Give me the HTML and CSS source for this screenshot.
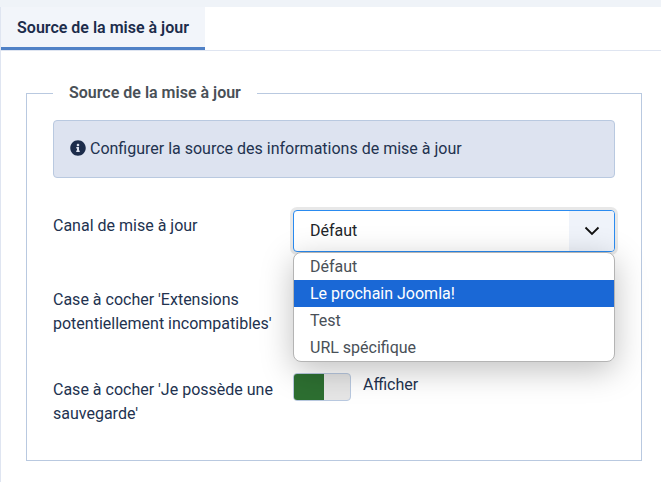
FILE: index.html
```html
<!DOCTYPE html>
<html lang="fr">
<head>
    <meta charset="UTF-8">
    <meta name="viewport" content="width=device-width, initial-scale=1.0">
    <title>Source de la mise à jour</title>
    <link rel="stylesheet" href="styles.css">
</head>
<body>
    <div class="tabs">
        <button class="tab">Source de la mise à jour</button>
    </div>

    <div class="panel">
        <fieldset class="options">
            <legend>Source de la mise à jour</legend>

            <div class="alert">
                <svg class="info-icon" viewBox="0 0 512 512" width="16" height="16">
                    <path d="M256 8C119 8 8 119 8 256s111 248 248 248 248-111 248-248S393 8 256 8zm0 110c23.2 0 42 18.800 42 42s-18.800 42-42 42-42-18.800-42-42 18.800-42 42-42zm56 254c0 6.600-5.400 12-12 12h-88c-6.600 0-12-5.400-12-12v-24c0-6.600 5.400-12 12-12h12v-64h-12c-6.600 0-12-5.400-12-12v-24c0-6.600 5.400-12 12-12h64c6.600 0 12 5.400 12 12v100h12c6.600 0 12 5.400 12 12v24z"/>
                </svg>
                Configurer la source des informations de mise à jour
            </div>

            <!-- Update channel -->
            <div class="row row-channel">
                <label class="row-label">Canal de mise à jour</label>
                <div class="select-wrap">
                    <div class="select">
                        <span class="select-value">Défaut</span>
                        <span class="select-arrow">
                            <svg viewBox="0 0 16 16" width="16" height="16">
                                <path d="M1.500 4.500l6.500 6.500 6.500-6.500" fill="none" stroke="#111" stroke-width="1.800"/>
                            </svg>
                        </span>
                    </div>
                    <ul class="dropdown">
                        <li>Défaut</li>
                        <li class="selected">Le prochain Joomla!</li>
                        <li>Test</li>
                        <li>URL spécifique</li>
                    </ul>
                </div>
            </div>

            <div class="row row-compat">
                <label class="row-label">Case à cocher 'Extensions potentiellement incompatibles'</label>
            </div>

            <div class="row row-backup">
                <label class="row-label">Case à cocher 'Je possède une sauvegarde'</label>
                <div class="switch-wrap">
                    <span class="switch"><span class="switch-on"></span></span>
                    <span class="switch-text">Afficher</span>
                </div>
            </div>
        </fieldset>
    </div>
</body>
</html>
```

FILE: styles.css
```css
* {
    box-sizing: border-box;
}
html, body {
    height: 100%;
}
body {
    margin: 0;
    padding-top: 7px;
    background: #eff3f8;
    font-family: Roboto, "Liberation Sans", sans-serif;
    font-size: 16px;
    line-height: 24px;
    color: #22324f;
    overflow: hidden;
}
.tabs {
    height: 44px;
    background: #fff;
    border-left: 1px solid #dfe5f1;
    border-bottom: 1px solid #dfe5f1;
}
.tab {
    display: block;
    width: 204px;
    height: 43px;
    padding: 0;
    border: none;
    border-bottom: 3px solid #5081c6;
    background: #f2f5fa;
    font-family: inherit;
    font-size: 16px;
    font-weight: 600;
    color: #1c2c4b;
}
.panel {
    height: 431px;
    padding: 30px 19px 0 25px;
    background: #fff;
    border-left: 1px solid #dfe5f1;
}
.options {
    height: 380px;
    margin: 0;
    padding: 15px 26px 0;
    border: 1px solid #b9c9e0;
    min-width: 0;
}
.options legend {
    padding: 0 16px;
    font-size: 16px;
    font-weight: 600;
    line-height: 24px;
    color: #495057;
}
.alert {
    display: block;
    height: 58px;
    padding: 16px;
    background: #dde3f0;
    border: 1px solid #b9c9e0;
    border-radius: 4px;
    color: #22324f;
    white-space: nowrap;
}
.info-icon {
    vertical-align: -2px;
    fill: #1c2c4b;
}
.row {
    display: flex;
}
.row-label {
    width: 240px;
    flex: none;
    padding-right: 16px;
}
.row-channel {
    margin-top: 32px;
}
.row-channel .row-label {
    padding-top: 4px;
}
.row-compat {
    margin-top: 32px;
    height: 89px;
}
.row-compat .row-label {
    padding-top: 4px;
}
.row-backup .row-label {
    padding-top: 5px;
}
.select-wrap {
    position: relative;
    width: 322px;
}
.select {
    display: flex;
    height: 42px;
    border: 1px solid #2a8bf0;
    border-radius: 4px;
    background: #fff;
    box-shadow: 0 0 0 3px rgba(0,0,0,0.09);
    color: #212529;
}
.select-value {
    flex: 1;
    padding: 8px 16px;
}
.select-arrow {
    display: flex;
    align-items: center;
    justify-content: center;
    width: 45px;
    background: #eff3fa;
    border-radius: 0 3px 3px 0;
}
.dropdown {
    position: absolute;
    top: 42px;
    left: 0;
    right: 0;
    margin: 0;
    padding: 0;
    list-style: none;
    background: #fff;
    border: 1px solid #b4b4b4;
    border-radius: 8px;
    overflow: hidden;
    box-shadow: 0 8px 32px rgba(0,0,0,0.25);
    color: #495057;
}
.dropdown li {
    height: 27px;
    line-height: 27px;
    padding-left: 16px;
}
.dropdown .selected {
    background: #1a68d6;
    color: #fff;
}
.switch-wrap {
    display: flex;
    align-items: flex-start;
}
.switch {
    display: block;
    width: 58px;
    height: 28px;
    background: #e6e6e6;
    border: 1px solid #b9c9e0;
    border-radius: 4px;
    overflow: hidden;
}
.switch-on {
    display: block;
    width: 30px;
    height: 100%;
    background: #2d6f31;
}
.switch-text {
    margin-left: 12px;
    color: #22324f;
}
```
